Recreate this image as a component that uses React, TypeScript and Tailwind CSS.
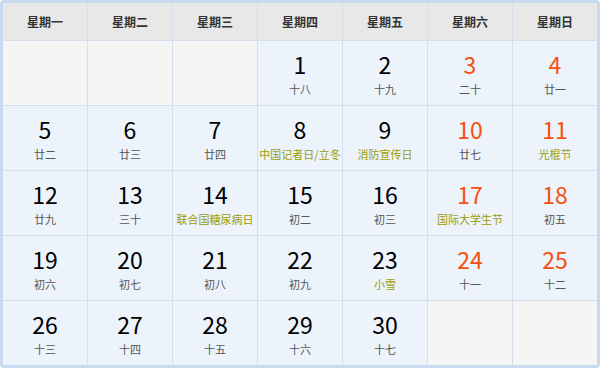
import React from 'react';

interface Day {
  day: number;
  sub: string;
  weekend?: boolean;
  fest?: boolean;
}

const weekNames = ['星期一', '星期二', '星期三', '星期四', '星期五', '星期六', '星期日'];

const cells: (Day | null)[] = [
  null, null, null,
  { day: 1, sub: '十八' },
  { day: 2, sub: '十九' },
  { day: 3, sub: '二十', weekend: true },
  { day: 4, sub: '廿一', weekend: true },
  { day: 5, sub: '廿二' },
  { day: 6, sub: '廿三' },
  { day: 7, sub: '廿四' },
  { day: 8, sub: '中国记者日/立冬', fest: true },
  { day: 9, sub: '消防宣传日', fest: true },
  { day: 10, sub: '廿七', weekend: true },
  { day: 11, sub: '光棍节', weekend: true, fest: true },
  { day: 12, sub: '廿九' },
  { day: 13, sub: '三十' },
  { day: 14, sub: '联合国糖尿病日', fest: true },
  { day: 15, sub: '初二' },
  { day: 16, sub: '初三' },
  { day: 17, sub: '国际大学生节', weekend: true, fest: true },
  { day: 18, sub: '初五', weekend: true },
  { day: 19, sub: '初六' },
  { day: 20, sub: '初七' },
  { day: 21, sub: '初八' },
  { day: 22, sub: '初九' },
  { day: 23, sub: '小雪', fest: true },
  { day: 24, sub: '十一', weekend: true },
  { day: 25, sub: '十二', weekend: true },
  { day: 26, sub: '十三' },
  { day: 27, sub: '十四' },
  { day: 28, sub: '十五' },
  { day: 29, sub: '十六' },
  { day: 30, sub: '十七' },
  null, null,
];

export default function App() {
  return (
    <div className="w-[600px] h-[368px] bg-white font-['Microsoft_YaHei','Noto_Sans_CJK_SC',sans-serif]">
      <div className="h-full border-[3px] border-[#c8d9f0] rounded-[4px] overflow-hidden">
        <div className="grid grid-cols-7 grid-rows-[37px_repeat(5,64px)] gap-px bg-[#d4dfee] h-full">
          {weekNames.map(name => (
            <div key={name} className="bg-[#e8e8e8] flex items-center justify-center text-[12px] font-bold text-[#333]">
              {name}
            </div>
          ))}
          {cells.map((c, i) =>
            c ? (
              <div key={i} className="bg-[#ecf3fb] flex flex-col items-center pt-[6px]">
                <span className={`text-[23px] leading-[34px] ${c.weekend ? 'text-[#f5500f]' : 'text-black'}`}>
                  {c.day}
                </span>
                <span className={`text-[11px] leading-[16px] whitespace-nowrap ${c.fest ? 'text-[#9c9c00]' : 'text-[#555]'}`}>
                  {c.sub}
                </span>
              </div>
            ) : (
              <div key={i} className="bg-[#f5f5f5]" />
            )
          )}
        </div>
      </div>
    </div>
  );
}
